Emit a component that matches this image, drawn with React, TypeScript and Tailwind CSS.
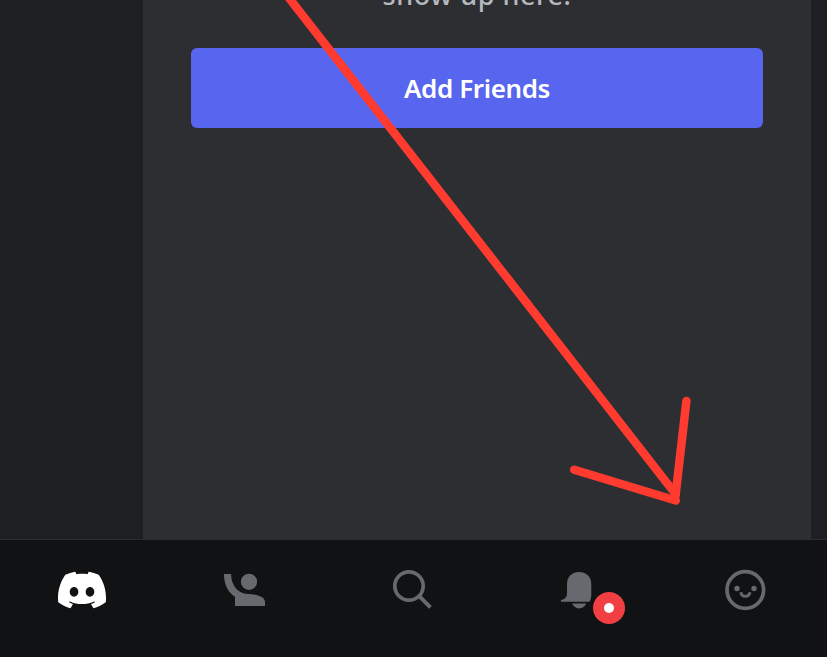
import { SiDiscord } from "react-icons/si";

function FriendsIcon() {
  return (
    <svg viewBox="0 0 48 48" className="h-12 w-12 shrink-0" fill="currentColor">
      <circle cx="28" cy="15.8" r="8.1" />
      <path d="M3 8H10C10.5 19.5 16.5 27.6 27 28C38 28.3 44 31.5 44 36V40H14V30.7C7 26.5 3 18.5 3 8Z" />
    </svg>
  );
}

function SearchIcon() {
  return (
    <svg viewBox="0 0 48 48" className="h-12 w-12 shrink-0" fill="none" stroke="currentColor">
      <circle cx="21" cy="20" r="14.2" strokeWidth="3.7" />
      <path d="M31.2 30.2L42.4 41.4" strokeWidth="4" />
    </svg>
  );
}

function BellIcon() {
  return (
    <svg viewBox="0 0 48 48" className="h-12 w-12 shrink-0" fill="currentColor">
      <path d="M12 18C12 10.8 17 6 24.1 6S36.3 10.8 36.3 18V29C36.3 32 35.6 34 34.3 35.8H6V34C9.5 33.5 12 31.5 12 27Z" />
      <path d="M17 37.6H31.4C29.8 40.7 27.6 42.4 24.2 42.4S18.6 40.7 17 37.6Z" />
    </svg>
  );
}

function ProfileIcon() {
  return (
    <svg viewBox="0 0 48 48" className="h-12 w-12 shrink-0" fill="none" stroke="currentColor">
      <circle cx="24.3" cy="24" r="18.3" strokeWidth="3.7" />
      <circle cx="16" cy="22.5" r="2.7" fill="currentColor" stroke="none" />
      <circle cx="33" cy="22.5" r="2.7" fill="currentColor" stroke="none" />
      <path d="M19.8 26.2C21 31.7 27.8 31.7 29 26.2" strokeWidth="3" />
    </svg>
  );
}

function Arrow() {
  return (
    <svg
      viewBox="0 0 827 657"
      className="pointer-events-none absolute inset-0 h-full w-full"
      fill="none"
      stroke="#ff3b30"
      strokeWidth="8.5"
      strokeLinecap="round"
      strokeLinejoin="round"
    >
      <path d="M282.8 -10L675.5 494" />
      <path d="M686.4 401L675.4 496.5" />
      <path d="M574.2 469.8L675.8 500.5" />
    </svg>
  );
}

export default function App() {
  return (
    <div className="relative flex h-[657px] w-[827px] flex-col overflow-hidden bg-[#1e1f22] font-['Noto_Sans','Open_Sans',sans-serif]">
      <div className="flex h-[539px] pr-4 pl-[143px]">
        <main className="flex flex-1 flex-col items-stretch bg-[#2d2e32] px-12">
          <div className="flex h-12 items-start justify-center">
            <p className="-mt-[23px] text-[27px] leading-9 font-medium tracking-[0.55px] whitespace-nowrap text-[#b5b8bf]">
              show up here.
            </p>
          </div>
          <button className="flex h-20 items-center justify-center rounded-md bg-[#5865ef] text-[26px] leading-9 font-semibold tracking-[-0.4px] text-white">
            Add Friends
          </button>
        </main>
      </div>
      <nav className="grid h-[118px] grid-cols-[164px_162px_172px_162px_170px] justify-items-center border-t border-[#2b2c31] bg-[#111214] pt-[26px] text-[#67696e]">
        <SiDiscord className="h-12 w-12 text-white" />
        <FriendsIcon />
        <SearchIcon />
        <div className="relative h-12 w-12">
          <BellIcon />
          <span className="absolute top-[26px] left-[38px] flex h-8 w-8 items-center justify-center rounded-full bg-[#f23f43]">
            <span className="h-2.5 w-2.5 rounded-full bg-white" />
          </span>
        </div>
        <ProfileIcon />
      </nav>
      <Arrow />
    </div>
  );
}
